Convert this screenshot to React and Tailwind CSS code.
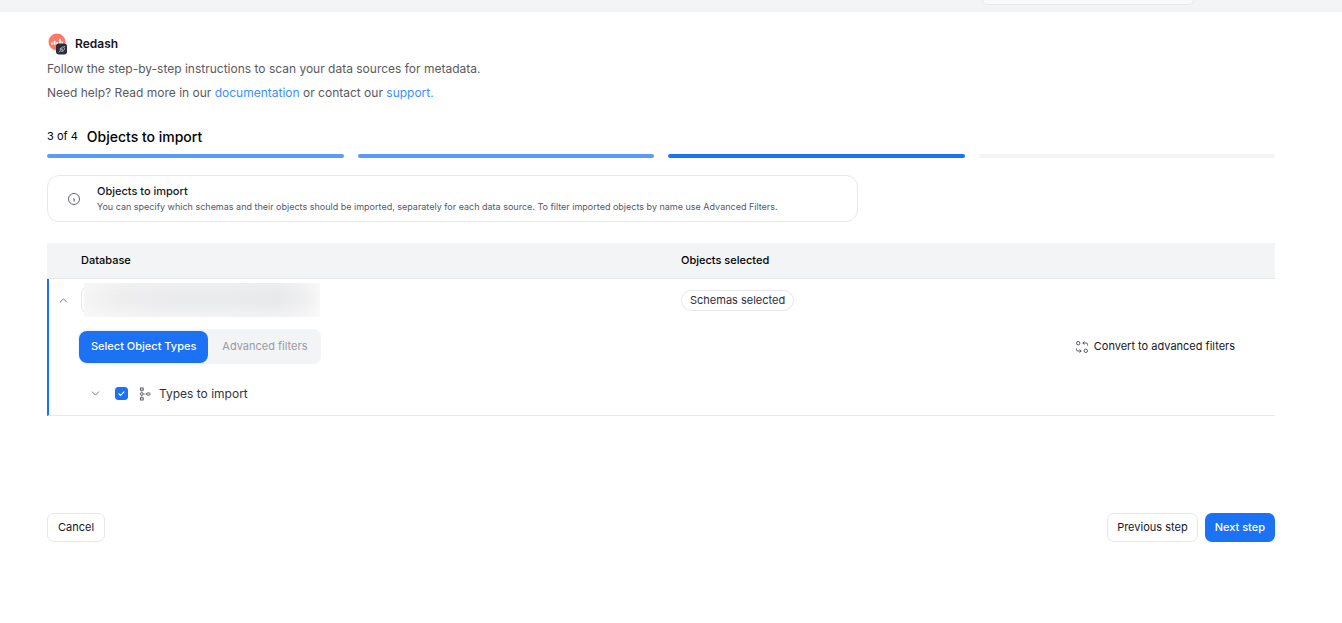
import React from "react";
import { ChevronDown, ChevronUp } from "lucide-react";

function RedashLogo() {
  return (
    <svg width="20" height="22" viewBox="0 0 20 22" aria-hidden="true">
      <circle cx="10" cy="9" r="8.5" fill="#ff7964" />
      <g fill="#fff">
        <rect x="4" y="9.5" width="1.8" height="2.2" />
        <rect x="6.7" y="7.8" width="1.8" height="3.9" />
        <rect x="9.4" y="9" width="1.8" height="2.7" />
        <rect x="12.1" y="5.8" width="1.8" height="5.9" />
        <rect x="14.6" y="8.5" width="1.5" height="3.2" />
      </g>
      <rect x="9" y="10.5" width="11" height="11" rx="3" fill="#2b2d38" />
      <g fill="none" stroke="#b9bac2" strokeWidth="0.9" strokeLinecap="round">
        <path d="M12 19l1-1M17.8 13.2l-.8.8M13.2 15.4l2.6 2.6M13.6 15.6l-.4.8a1.7 1.7 0 0 0 2.3 2l.5-.4M14.6 14.6l.7-.5a1.7 1.7 0 0 1 2.1 2.4l-.6.6z" />
      </g>
    </svg>
  );
}

function InfoIcon() {
  return (
    <svg width="14" height="14" viewBox="0 0 14 14" fill="none" stroke="#3c3f4c" aria-hidden="true">
      <circle cx="7" cy="7" r="5.5" strokeWidth="0.8" />
      <path d="M6.3 6.8h.8v2.8" strokeWidth="0.9" />
      <path d="M7 4.5v.6" strokeWidth="0.7" strokeOpacity="0.3" />
    </svg>
  );
}

function TypesIcon() {
  return (
    <svg width="12" height="14" viewBox="0 0 12 14" fill="none" stroke="#4a4c55" strokeWidth="0.9" aria-hidden="true">
      <rect x="1.4" y="1" width="2.8" height="2.2" />
      <rect x="1.4" y="5.9" width="2.8" height="2.2" rx="0.8" />
      <rect x="1.4" y="10.8" width="2.8" height="2.2" />
      <rect x="7.6" y="5.9" width="3.4" height="2.2" rx="0.9" />
      <path d="M2.8 3.2v2.7M2.8 8.1v2.7M4.2 7h3.4" strokeOpacity="0.6" />
    </svg>
  );
}

function ConvertIcon() {
  return (
    <svg width="14" height="14" viewBox="0 0 14 14" fill="none" stroke="#44464f" strokeWidth="0.9" aria-hidden="true">
      <circle cx="3.2" cy="3.2" r="1.7" />
      <circle cx="10.8" cy="10.8" r="1.7" />
      <path d="M9.4 1.4L7.8 3l1.6 1.6M7.8 3h3.4a1.3 1.3 0 0 1 1.3 1.3v1.2" />
      <path d="M4.6 9.4L6.2 11l-1.6 1.6M6.2 11H2.8a1.3 1.3 0 0 1-1.3-1.3V8.5" />
    </svg>
  );
}

const steps = ["bg-[#5b9bf8]", "bg-[#5b9bf8]", "bg-[#1c72f5]", "bg-[#f3f4f6]"];

export default function App() {
  return (
    <div className="min-h-screen bg-white font-['Inter',sans-serif] text-[11px] text-[#15161f]">
      <div className="flex h-3 justify-end bg-[#f3f4f6] pr-[148px]">
        <div className="h-[5px] w-[212px] rounded-b-lg border border-t-0 border-[#e9eaec] bg-[#fafafa]" />
      </div>

      <main className="pt-5 pr-[67px] pb-20 pl-[47px]">
        <header>
          <div className="flex h-6 items-center gap-2">
            <RedashLogo />
            <h1 className="text-[12px] font-semibold">Redash</h1>
          </div>
          <div className="mt-px text-[12px] leading-6 text-[#5a5a5e]">
            <p>Follow the step-by-step instructions to scan your data sources for metadata.</p>
            <p>
              Need help? Read more in our{" "}
              <a href="#documentation" className="text-[#3b91f6]">documentation</a> or contact our{" "}
              <a href="#support" className="text-[#3b91f6]">support.</a>
            </p>
          </div>
        </header>

        <section className="mt-[19px]">
          <div className="flex h-6 items-center gap-[9px] text-black">
            <span>3 of 4</span>
            <h2 className="text-[14px] font-medium">Objects to import</h2>
          </div>
          <div className="mt-[6px] grid grid-cols-4 gap-[14px]">
            {steps.map((color, i) => (
              <div key={i} className={`h-1 rounded-full ${color}`} />
            ))}
          </div>
        </section>

        <section className="mt-[17px] flex h-[47px] max-w-[811px] items-center gap-4 rounded-xl border border-[#e8e9ec] pl-[19px]">
          <InfoIcon />
          <div>
            <h3 className="leading-4 font-medium">Objects to import</h3>
            <p className="text-[9px] leading-4 text-[#55576b]">
              You can specify which schemas and their objects should be imported, separately for each data source. To
              filter imported objects by name use Advanced Filters.
            </p>
          </div>
        </section>

        <table className="mt-[21px] w-full table-fixed border-separate border-spacing-0 text-left">
          <colgroup>
            <col className="w-[34px]" />
            <col />
            <col />
          </colgroup>
          <thead>
            <tr className="h-9 bg-[#f3f4f6] text-black">
              <th aria-label="Expand" className="border-b border-[#e6e7ea]" />
              <th className="border-b border-[#e6e7ea] font-medium">Database</th>
              <th className="border-b border-[#e6e7ea] pl-[3px] font-medium">Objects selected</th>
            </tr>
          </thead>
          <tbody>
            <tr className="h-[42px]">
              <td className="border-l-2 border-[#1c72f5] pl-[6px]">
                <button type="button" aria-label="Collapse" className="flex size-4 items-center justify-center">
                  <ChevronUp size={13} strokeWidth={1.8} color="#777980" />
                </button>
              </td>
              <td>
                <div className="flex h-7 w-[239px] items-center rounded-lg border-l border-[#e4e5e8] pl-0.5">
                  <div className="h-[34px] w-full bg-[linear-gradient(90deg,#f6f5f5,#efeeef_15%,#ebebed_35%,#eaebed_60%,#e8e9eb_82%,#f0f0f1_94%,#f8f8f8)]">
                    <div className="h-full bg-[linear-gradient(180deg,#ffffff33,#ffffff00_40%,#ffffff00_55%,#ffffff66)]" />
                  </div>
                </div>
              </td>
              <td className="pl-[3px]">
                <span className="inline-flex h-[21px] items-center rounded-full border border-[#e6e7ea] px-2 text-[#2b2d38]">
                  Schemas selected
                </span>
              </td>
            </tr>
            <tr>
              <td colSpan={3} className="border-b border-l-2 border-b-[#e8e9eb] border-l-[#1c72f5] p-0">
                <div className="flex items-center justify-between pt-2 pr-10 pl-[29px]">
                  <div className="flex h-[35px] items-center rounded-lg bg-[#f3f4f6] pl-px">
                    <button type="button" className="h-8 rounded-lg bg-[#1c72f5] px-3 font-medium text-white">
                      Select Object Types
                    </button>
                    <button type="button" className="h-8 px-[14px] text-[#989aa4]">Advanced filters</button>
                  </div>
                  <button type="button" className="flex items-center gap-[5px]">
                    <ConvertIcon />
                    Convert to advanced filters
                  </button>
                </div>
                <div className="flex h-[51px] items-center pt-2 pl-[38px]">
                  <button type="button" aria-label="Expand types" className="flex size-4 items-center justify-center">
                    <ChevronDown size={13} strokeWidth={1.8} color="#777980" />
                  </button>
                  <label className="ml-3 flex items-center text-[12px] text-[#33343b]">
                    <span className="grid size-[13px] place-items-center">
                      <input
                        type="checkbox"
                        defaultChecked
                        className="peer col-start-1 row-start-1 size-[13px] appearance-none rounded-[3px] border border-[#c8cad0] checked:border-[#1c72f5] checked:bg-[#1c72f5]"
                      />
                      <svg
                        className="pointer-events-none invisible col-start-1 row-start-1 peer-checked:visible"
                        width="9"
                        height="9"
                        viewBox="0 0 8 8"
                        fill="none"
                        stroke="#fff"
                        strokeLinecap="round"
                        aria-hidden="true"
                      >
                        <path d="M1.6 4.2l1.6 1.5 3-3.2" />
                      </svg>
                    </span>
                    <span className="mr-2 ml-[11px]">
                      <TypesIcon />
                    </span>
                    Types to import
                  </label>
                </div>
              </td>
            </tr>
          </tbody>
        </table>

        <footer className="mt-[97px] flex items-center gap-[7px]">
          <button type="button" className="mr-auto h-[29px] rounded-[7px] border border-[#e6e7ea] px-[10px]">
            Cancel
          </button>
          <button type="button" className="h-[29px] rounded-[7px] border border-[#e6e7ea] px-[9px]">
            Previous step
          </button>
          <button type="button" className="h-[29px] rounded-[7px] bg-[#1c72f5] px-[10px] font-medium text-white">
            Next step
          </button>
        </footer>
      </main>
    </div>
  );
}
